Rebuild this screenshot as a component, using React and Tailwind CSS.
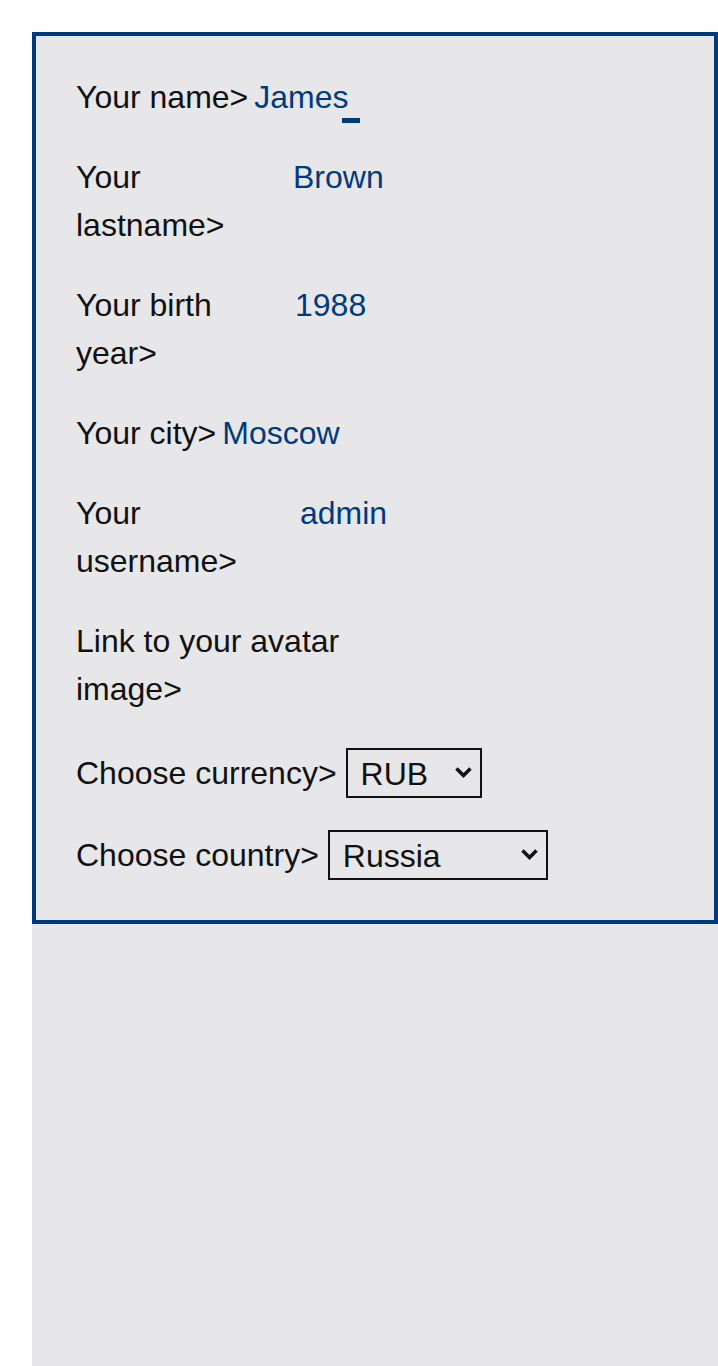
const fields = [
  { label: "Your name>", value: "James", w: "", caret: true },
  { label: "Your lastname>", value: "Brown", w: "w-[211px]" },
  { label: "Your birth year>", value: "1988", w: "w-[213px]" },
  { label: "Your city>", value: "Moscow", w: "" },
  { label: "Your username>", value: "admin", w: "w-[218px]" },
  { label: "Link to your avatar image>", value: "", w: "w-[280px]" },
];

function Field({ label, value, w, caret }) {
  return (
    <div className="flex items-start gap-[6px]">
      <label className={`shrink-0 ${w}`}>{label}</label>
      <div className="relative">
        <input
          type="text"
          defaultValue={value}
          className="w-[240px] h-[48px] bg-transparent outline-none text-[#003a7e]"
        />
        {caret && <span className="absolute left-[88px] top-[45px] w-[18px] h-[5px] bg-[#003a7e]" />}
      </div>
    </div>
  );
}

function Chevron() {
  return (
    <svg className="pointer-events-none absolute right-[9px] top-[18px]" width="19" height="13" viewBox="0 0 19 13">
      <polyline points="2.5,2.5 9.5,9.5 16.5,2.5" fill="none" stroke="#111" strokeWidth="3.6" />
    </svg>
  );
}

function Select({ value, options, w }) {
  return (
    <div className={`relative ml-[9px] ${w}`}>
      <select
        defaultValue={value}
        className="appearance-none w-full h-[50px] border-2 border-[#111] bg-transparent pl-[13px] text-[#111] outline-none"
      >
        {options.map((o) => (
          <option key={o}>{o}</option>
        ))}
      </select>
      <Chevron />
    </div>
  );
}

export default function App() {
  return (
    <div className="min-h-screen bg-white pt-[32px] pl-[32px] font-['Liberation_Sans',Arial,sans-serif] text-[32px] leading-[48px] text-[#111]">
      <div className="min-h-[1334px] bg-[#e7e7ea]">
        <div className="border-4 border-[#003a7e] pl-[40px] pt-[37px] pb-[40px] flex flex-col gap-[32px]">
          {fields.map((f) => (
            <Field key={f.label} {...f} />
          ))}

          <div className="flex items-center mt-[3px]">
            <label>Choose currency&gt;</label>
            <Select value="RUB" options={["RUB", "USD", "EUR"]} w="w-[136px]" />
          </div>

          <div className="flex items-center">
            <label>Choose country&gt;</label>
            <Select value="Russia" options={["Russia", "USA", "Germany"]} w="w-[220px]" />
          </div>
        </div>
      </div>
    </div>
  );
}
